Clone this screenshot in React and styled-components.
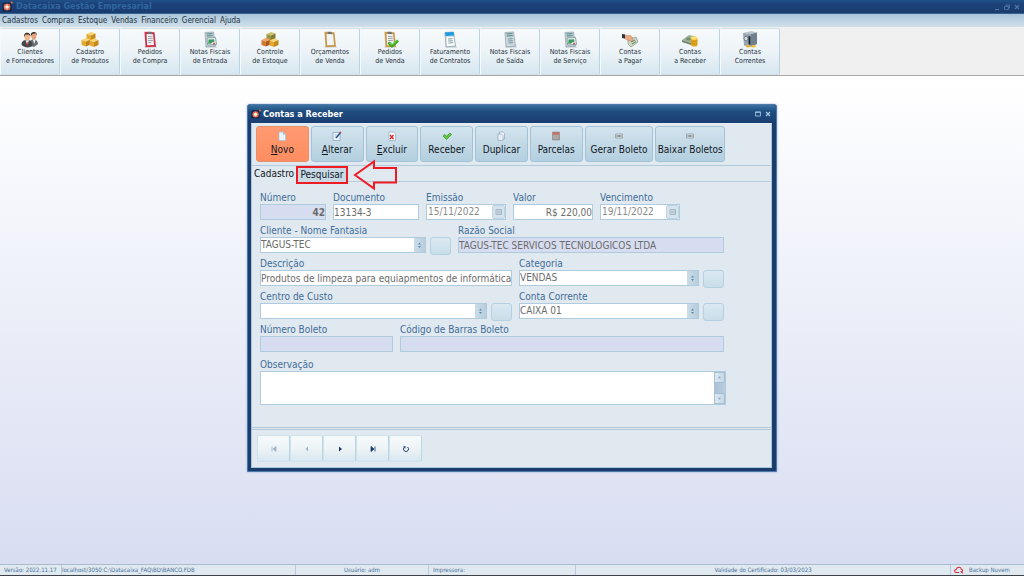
import styled, { createGlobalStyle, css } from "styled-components";

const GlobalStyle = createGlobalStyle`
  * {
    box-sizing: border-box;
  }

  body {
    margin: 0;
  }

  body,
  button,
  input,
  select,
  textarea {
    font-family: "DejaVu Sans Condensed", "DejaVu Sans", sans-serif;
  }

  button {
    padding: 0;
    cursor: pointer;
  }
`;

const Page = styled.div`
  min-height: 100vh;
  display: flex;
  flex-direction: column;
  background: linear-gradient(#ffffff 14%, #d7dcf1);
`;

const AppTitleBar = styled.header`
  height: 14px;
  padding: 0 4px 0 2px;

  display: flex;
  align-items: center;
  gap: 3px;

  background: linear-gradient(#20508a, #1b4278 30%, #1a3c70);
  border-bottom: 1px solid #34618f;
`;

const AppTitle = styled.h1`
  margin: 0;
  font-size: 8px;
  line-height: 12px;
  font-weight: bold;
  font-family: "DejaVu Sans", sans-serif;
  color: #30679f;
`;

const WindowControls = styled.div`
  margin-left: auto;
  display: flex;
  align-items: center;
  gap: 4px;
`;

const WindowButton = styled.button`
  width: 6px;
  height: 8px;
  display: flex;
  border: 0;
  background: none;
  color: ${({ $color }) => $color || "#4f78a6"};

  svg {
    width: 6px;
    height: 8px;
  }
`;

const MenuBar = styled.nav`
  height: 13px;
  padding: 0 2px;

  display: flex;
  align-items: center;
  gap: 4px;

  background: linear-gradient(#a9c5da, #d0e0ea);
`;

const MenuLink = styled.a`
  font-size: 8px;
  line-height: 12px;
  color: #24323f;
  text-decoration: none;
`;

const Toolbar = styled.div`
  height: 49px;
  padding-top: 1px;
  display: flex;
  background: #f0f0f0;
  border-bottom: 1px solid #a8a8a8;
`;

const ToolButton = styled.button`
  flex: 0 0 60px;
  padding-top: 2px;

  display: flex;
  flex-direction: column;
  align-items: center;

  border: 1px solid #cfe0ea;
  border-left-color: #f4fafd;
  border-right-color: #b9d3e2;
  border-radius: 2px;
  background: linear-gradient(#f7fafb, #eef4f8 45%, #d7e7f0);

  font-size: 7px;
  line-height: 9px;
  color: #26323c;
  white-space: pre-line;

  svg {
    width: 18px;
    height: 17px;
  }
`;

const Desktop = styled.main`
  flex: 1;
  padding: 28px 0;
`;

const Dialog = styled.section`
  width: 530px;
  max-width: 100%;
  margin: 0 auto;

  border: 1px solid #4d7aa8;
  border-radius: 3px 3px 0 0;
  background: #1a3d6d;
  box-shadow: 0 0 2px #8aa5cc;
`;

const DialogTitleBar = styled.header`
  height: 18px;
  padding: 0 5px 0 3px;

  display: flex;
  align-items: center;
  gap: 2px;

  border-radius: 3px 3px 0 0;
  background: linear-gradient(#3a72a0, #1f4d80 35%, #1a3d70);
`;

const DialogTitle = styled.h2`
  margin: 0;
  font-size: 9px;
  line-height: 12px;
  font-weight: bold;
  color: #ffffff;
`;

const DialogBody = styled.div`
  margin: 0 4px 3px 3px;
  border: 1px solid #a9c6da;
  border-top-color: #e6eef5;
  background: #e1e9f0;
`;

const Actions = styled.div`
  height: 42px;
  padding: 2px 46px 3px 4px;

  display: grid;
  grid-template-columns: repeat(6, 53fr) 69fr 70fr;
  gap: 2px;

  border-bottom: 1px solid #b4cadb;
`;

const ActionButton = styled.button`
  min-width: 0;
  padding-top: 2px;

  display: flex;
  flex-direction: column;
  align-items: center;
  gap: 2px;

  border: 1px solid ${({ $active }) => ($active ? "#e8906a" : "#a2c2d7")};
  border-radius: 3px;
  background: ${({ $active }) =>
    $active
      ? "linear-gradient(#ff9a72, #ff8d60)"
      : "linear-gradient(#d3e4ee, #c3d9e6 50%, #b3cfe0)"};

  font-size: 10px;
  line-height: 14px;
  color: #10181f;
  white-space: nowrap;

  svg {
    width: 10px;
    height: 10px;
    margin-top: 2px;
  }
`;

const Tabs = styled.div`
  position: relative;
  height: 16px;
  display: flex;
  align-items: flex-start;
  border-bottom: 1px solid #b9cedd;
`;

const Tab = styled.button`
  flex: none;
  border: 0;
  font-size: 10px;
  color: #10181f;

  ${({ $active }) =>
    $active
      ? css`
          width: 44px;
          height: 16px;
          line-height: 16px;
          background: #e1e9f0;
        `
      : css`
          width: 52px;
          height: 18px;
          line-height: 14px;
          border: 2px solid #ed1c24;
          background: #c9dae6;
        `}
`;

const Pointer = styled.svg`
  position: absolute;
  left: 101px;
  top: -7px;
  width: 44px;
  height: 32px;
`;

const Form = styled.form`
  padding: 10px 47px 22px 8px;
  display: flex;
  flex-direction: column;
  gap: 5px;
`;

const Row = styled.div`
  display: grid;
  grid-template-columns: ${({ $columns }) => $columns};
  align-items: end;
  gap: 7px;
`;

const Field = styled.div`
  min-width: 0;
  display: flex;
  flex-direction: column;
`;

const NoteField = styled(Field)`
  margin: 2px -2px 0 0;
`;

const Label = styled.label`
  font-size: 10px;
  line-height: 12px;
  color: #3f6c98;
  white-space: nowrap;
`;

const fieldBox = css`
  min-width: 0;
  width: 100%;
  height: 16px;
  padding: 0;

  border: 1px solid #b0cbde;
  border-radius: 0;
  outline: 0;
  background: ${({ readOnly }) => (readOnly ? "#d7ddf0" : "#ffffff")};

  font-size: 10px;
  line-height: 14px;
  color: #6b6b6b;
`;

const Input = styled.input`
  ${fieldBox}
  text-align: ${({ $align }) => $align || "left"};
  font-weight: ${({ $bold }) => ($bold ? "bold" : "normal")};
`;

const Combo = styled.div`
  display: flex;
  gap: 4px;
`;

const SelectWrap = styled.div`
  position: relative;
  flex: 1;
  min-width: 0;
`;

const Select = styled.select`
  ${fieldBox}
  display: block;
  appearance: none;
`;

const Spinner = styled.span`
  position: absolute;
  top: 1px;
  right: 1px;
  width: 11px;
  height: 14px;

  display: flex;
  background: linear-gradient(90deg, #cbdce8, #b7cedd);
  pointer-events: none;
`;

const LookupButton = styled.button`
  flex: 0 0 21px;
  height: 18px;
  margin-bottom: -2px;
  border: 1px solid #b5d0e0;
  border-radius: 3px;
  background: linear-gradient(#dae9f2, #c9dee9);
`;

const DateBox = styled.div`
  display: flex;
  border: 1px solid #b0cbde;
  background: #ffffff;

  input {
    height: 14px;
    padding: 0 1px;
    border: 0;
    color: #8b8b8b;
  }
`;

const DateButton = styled.button`
  flex: 0 0 13px;
  display: flex;
  border: 1px solid #bdd4e2;
  border-radius: 2px;
  background: #d5e3ec;
`;

const NoteBox = styled.div`
  height: 34px;
  display: flex;
  border: 1px solid #b0cbde;
  background: #ffffff;
`;

const Note = styled.textarea`
  flex: 1;
  padding: 1px;
  border: 0;
  outline: 0;
  resize: none;
  font-size: 10px;
  color: #6b6b6b;
`;

const ScrollTrack = styled.div`
  width: 11px;
  display: flex;
  flex-direction: column;
  justify-content: space-between;
  background: linear-gradient(90deg, #a9bfd3, #b8cfe0);
`;

const ScrollButton = styled.button`
  height: 11px;
  display: flex;
  border: 1px solid #a3c2d6;
  border-radius: 1px;
  background: linear-gradient(90deg, #dce8f0, #c7d9e6);
`;

const Navigator = styled.footer`
  height: 40px;
  padding: 5px;
  display: flex;
  border-top: 3px double #b0c7d8;
`;

const NavButton = styled.button`
  flex: 0 0 33px;
  height: 27px;

  display: flex;
  align-items: center;
  justify-content: center;

  border: 1px solid #cfe2ec;
  border-right-color: #b9d6e5;
  border-radius: 2px;
  background: linear-gradient(#f7fafb, #edf3f6 50%, #d8e8f0);
  color: #183a6c;

  &:disabled {
    color: #9fb4c8;
  }

  svg {
    width: 8px;
    height: 8px;
  }
`;

const StatusBar = styled.footer`
  height: 12px;
  display: grid;
  grid-template-columns: 62fr 234fr 133fr 147fr 375fr 73fr;
  border-top: 1px solid #a5bcd3;
  border-bottom: 1px solid #3c4248;
  background: #e1e9f0;
`;

const StatusCell = styled.div`
  padding: 0 0 0 ${({ $inset }) => $inset || 0}px;

  display: flex;
  align-items: center;
  justify-content: ${({ $center }) => ($center ? "center" : "flex-start")};
  gap: 5px;

  border-right: 1px solid #b9cbdc;
  font-size: 6px;
  line-height: 10px;
  color: #47719a;
  white-space: nowrap;

  &:last-child {
    border-right: 0;
  }

  svg {
    width: 10px;
    height: 8px;
  }
`;

const Logo = ({ size }) => (
  <svg width={size} height={size} viewBox="0 0 12 12">
    <rect x="0.5" y="1.5" width="10" height="10" rx="1.5" fill="#14264a" />
    <rect x="2" y="3" width="7" height="7" rx="2" fill="#e0694a" />
    <circle cx="5.5" cy="6.5" r="2" fill="#fff1e4" />
    <path d="M5.500 3v1.500M5.500 8.500V10M2 6.500h1.500M7.500 6.500H9" stroke="#ffc4a3" strokeWidth="0.7" />
    <circle cx="10.700" cy="1.700" r="1.200" fill="#f0703c" />
  </svg>
);

const PeopleIcon = () => (
  <svg viewBox="0 0 18 17">
    <path d="M8 14c0-4 2-5.500 4.500-5.500S17 10 17 13l-4 3z" fill="#6b6f74" />
    <path d="M12 9l1.200 4 1.300-4z" fill="#eceff1" />
    <ellipse cx="12.800" cy="5" rx="2.600" ry="3.400" fill="#e3a47c" />
    <path d="M9.800 5C9 0 16.500-.5 15.900 4.500l-1.200-2.200-3 .4z" fill="#2e2521" />
    <path d="M.5 14c0-3.800 2-5 5.500-5s5.500 1.500 5.500 6c-3 2-8 2-11-1z" fill="#44484d" />
    <path d="M4.500 9.200L6.300 14 8 9.200z" fill="#f4f4f4" />
    <path d="M6 10l-.4 4 .9 1 .8-1z" fill="#c23b32" />
    <ellipse cx="6.300" cy="6" rx="2.800" ry="3.600" fill="#efb68d" />
    <path d="M3.200 6C2 .5 10 .2 9.300 5.500L8 3.400l-3.500.2z" fill="#33271f" />
  </svg>
);

const Cube = ({ x, y, top, left, right }) => (
  <g transform={`translate(${x} ${y})`}>
    <path d="M0 2l4.500-2L9 1.500 4.500 3.500z" fill={top} />
    <path d="M0 2l4.500 1.500v5L0 7z" fill={left} />
    <path d="M4.500 3.500L9 1.500v5l-4.500 2z" fill={right} />
  </g>
);

const BoxesIcon = ({ mixed }) => (
  <svg viewBox="0 0 18 17">
    <Cube
      x={5.5}
      y={1}
      top={mixed ? "#c9c26a" : "#f8d673"}
      left={mixed ? "#9c9740" : "#e2aa33"}
      right={mixed ? "#827c30" : "#c58a1c"}
    />
    <Cube
      x={0.5}
      y={7}
      top={mixed ? "#f0a566" : "#f8d673"}
      left={mixed ? "#d27a34" : "#e2aa33"}
      right={mixed ? "#b0571c" : "#c08318"}
    />
    <Cube x={8.500} y={7.500} top="#f8d673" left="#e2aa33" right="#c58a1c" />
  </svg>
);

const ClipboardIcon = ({ frame, check, blank }) => (
  <svg viewBox="0 0 18 17">
    <path d="M3 15.500l12-.5 1 1.500H4z" fill="#c9d0d5" />
    <path d="M3.500.8l10 .4 1.500 14.500-10.500.5z" fill={frame} />
    <path d="M5.500 3l6.500.2L13 14l-6.800.3z" fill="#f1f4f7" />
    <path d="M6.500.8h4l.5 2.200H7z" fill="#6f7377" />
    {!blank && (
      <path
        d="M7 5.500l4.500.2M7 7.500l4.700.2M7.200 9.500l4.700.1M7.300 11.500l3 .1"
        stroke="#888f96"
        strokeWidth="0.8"
      />
    )}
    {check && (
      <>
        <path d="M7.500 11.500l3.500 3.500 6-5.500" fill="none" stroke="#35a81b" strokeWidth="2.800" />
        <path d="M8 11.500l3 2.600 5.300-4.800" fill="none" stroke="#7be04d" strokeWidth="0.9" />
      </>
    )}
  </svg>
);

const InvoiceIcon = ({ variant }) => (
  <svg viewBox="0 0 18 17">
    <path d="M4 15.500l11-.5 1 1.500H5z" fill="#bcc8cf" />
    <path d="M4 1.500L12.500 1l2 14L5 16z" fill="#cbd9df" stroke="#8c9da6" strokeWidth="0.7" />
    {variant === "contract" ? (
      <>
        <path d="M5.500 6l7-.3 1.200 8.800-7.700.7z" fill="#fafcfd" />
        <path d="M4 1.500L12.500 1l.6 3.500-8.600.5z" fill="#1b9be4" />
      </>
    ) : (
      <path d="M5.500 3l6-.4M5.700 5l6.100-.3" stroke="#467f7b" strokeWidth="1" />
    )}
    <path d="M7 8l4.500-.3M7.200 10l4.600-.3M7.500 12l4.700-.4" stroke="#718d96" strokeWidth="0.9" />
    {variant === "chart" && (
      <>
        <path d="M6 7l8.500-.5 1 7-9 .5z" fill="#eef4f4" stroke="#687f86" strokeWidth="0.7" />
        <path d="M7.200 12.800l.3-4.300 5.500-.3.6 2.300-2.600 1-1 1.300z" fill="#3f9a63" />
        <path d="M12 12.500h2" stroke="#d54b46" strokeWidth="1.400" />
      </>
    )}
  </svg>
);

const PayIcon = () => (
  <svg viewBox="0 0 18 17">
    <path d="M7 9l8-3 2 5-7 5-3-3z" fill="#ccd6c3" stroke="#899880" strokeWidth="0.7" />
    <path d="M10 11l4-2M11 13l4-2.500" stroke="#688063" />
    <path d="M3 4l7 .8 2 2.200-1 .5 1 2-2 .5-4-1-3-2z" fill="#e9ab85" stroke="#b77554" strokeWidth="0.4" />
    <path d="M1 3l3 .5v4L1 7z" fill="#2f3338" />
  </svg>
);

const ReceiveIcon = () => (
  <svg viewBox="0 0 18 17">
    <path d="M1 9l7-5 7 1.500L10 12z" fill="#9fb09a" />
    <path d="M1 9v2l9 3v-2z" fill="#6f836d" />
    <ellipse cx="7.500" cy="8" rx="2.500" ry="1.500" fill="#76906e" />
    <path d="M10 7v7c0 2 6.500 2 6.500 0V7z" fill="#e4a91b" />
    <ellipse cx="13.200" cy="7" rx="3.300" ry="1.800" fill="#ffe06a" />
    <path
      d="M10 9.500c1 1.500 5 1.500 6.500 0M10 12c1 1.500 5 1.500 6.500 0"
      fill="none"
      stroke="#b67c10"
      strokeWidth="0.6"
    />
  </svg>
);

const SafeIcon = () => (
  <svg viewBox="0 0 18 17">
    <path d="M2 2l8-2 6 1.500-6 1.500z" fill="#bac6ce" />
    <path d="M2 2l8 1v13l-7-1.500z" fill="#96a5b0" />
    <path d="M10 3l6-1.500V13l-6 3z" fill="#6f818e" />
    <path d="M7.500 5l2 .4V14l-2-1z" fill="#1d2a34" />
    <circle cx="5" cy="7.500" r="2" fill="#dde5ea" stroke="#465660" strokeWidth="0.6" />
    <ellipse cx="7" cy="15.300" rx="2.200" ry="1.300" fill="#e8b32a" />
    <ellipse cx="12.500" cy="15.300" rx="2.400" ry="1.300" fill="#f0c038" />
  </svg>
);

const PageIcon = () => (
  <svg viewBox="0 0 10 10">
    <path d="M2 1h4l2.500 2.500V9.500H2z" fill="#eaf4fd" stroke="#9cc0e0" strokeWidth="0.6" />
    <path d="M6 1v2.500h2.500z" fill="#8bb9df" />
  </svg>
);

const EditIcon = () => (
  <svg viewBox="0 0 10 10">
    <path d="M1 1.500h7V9.500H1z" fill="#f3f7fc" stroke="#7d9cc2" strokeWidth="0.7" />
    <path d="M2.500 4h3M2.500 6h2" stroke="#8ea9c7" strokeWidth="0.7" />
    <path d="M4 7l4.500-5.500" stroke="#34558f" strokeWidth="1.600" />
    <path d="M8 2l1-1.200" stroke="#d9534b" strokeWidth="1.600" />
  </svg>
);

const DeleteIcon = () => (
  <svg viewBox="0 0 10 10">
    <path d="M2 1h5l1.500 1.500V9.500H2z" fill="#f4f7fb" stroke="#98a9ba" strokeWidth="0.7" />
    <path d="M3 4l3.500 4M6.500 4L3 8" stroke="#d8262a" strokeWidth="1.300" />
  </svg>
);

const CheckIcon = () => (
  <svg viewBox="0 0 10 10">
    <path
      d="M1 5l2-1.500 1.500 1.700L8 2l1.500 1.500L4.500 8.500z"
      fill="#5cc93c"
      stroke="#26851b"
      strokeWidth="0.6"
    />
  </svg>
);

const CopyIcon = () => (
  <svg viewBox="0 0 10 10">
    <path d="M3.500 1h3.500l1.500 1.500V8h-5z" fill="#f3f7fa" stroke="#839cb0" strokeWidth="0.6" />
    <path d="M2 3h3.500L7 4.500v5H2z" fill="#e7eff5" stroke="#839cb0" strokeWidth="0.6" />
  </svg>
);

const CalendarIcon = () => (
  <svg viewBox="0 0 10 10">
    <path d="M1.500 1h7v8h-7z" fill="#a39d9b" stroke="#7d7775" strokeWidth="0.5" />
    <path d="M2 1.500h6v2H2z" fill="#d0685c" />
    <path d="M2.500 5h5M2.500 7h5" stroke="#cdc7c4" strokeWidth="0.8" strokeDasharray="1 .6" />
  </svg>
);

const BarcodeIcon = () => (
  <svg viewBox="0 0 10 10">
    <path d="M1.500 3h7v4h-7z" fill="#dfe3e6" stroke="#8b949b" strokeWidth="0.7" />
    <path d="M3 4v2M4.300 4v2M5.600 4v2M7 4v2" stroke="#6d757b" strokeWidth="0.8" />
  </svg>
);

const DayIcon = () => (
  <svg width="11" height="12" viewBox="0 0 11 12">
    <path d="M3 3.500h5.500v5H3z" fill="none" stroke="#9aabb9" strokeWidth="0.8" />
    <path d="M4 5.200h4M4 6.800h4" stroke="#9aabb9" strokeWidth="0.7" />
  </svg>
);

const SpinIcon = () => (
  <svg width="11" height="14" viewBox="0 0 11 14">
    <path d="M5.500 4.500l1.500 2H4zM5.500 10L7 8H4z" fill="#5f8bb0" />
  </svg>
);

const ArrowIcon = ({ down }) => (
  <svg width="9" height="9" viewBox="0 0 9 9">
    <path d={down ? "M3 3.800h3L4.500 5.800z" : "M3 5.200h3L4.500 3.200z"} fill="#8ca5b9" />
  </svg>
);

const CloseIcon = () => (
  <svg viewBox="0 0 6 8">
    <path d="M1 2l4 4M5 2L1 6" stroke="currentColor" strokeWidth="1.200" />
  </svg>
);

const MaxIcon = () => (
  <svg viewBox="0 0 6 8">
    <path d="M.5 2h5v4h-5z" fill="none" stroke="currentColor" strokeWidth="0.8" />
    <path d="M.5 2.200h5" stroke="currentColor" />
  </svg>
);

const RestoreIcon = () => (
  <svg viewBox="0 0 6 8">
    <path
      d="M2 3.500V2h3.500v3H4.500M.5 3.500h4v3h-4z"
      fill="none"
      stroke="currentColor"
      strokeWidth="0.8"
    />
  </svg>
);

const MinIcon = () => (
  <svg viewBox="0 0 6 8">
    <path d="M1 6.500h4" stroke="currentColor" />
  </svg>
);

const FirstIcon = () => (
  <svg viewBox="0 0 8 8">
    <path d="M2 1.500v5M6 1.500v5L3 4z" fill="currentColor" stroke="currentColor" strokeWidth="0.8" />
  </svg>
);

const PrevIcon = () => (
  <svg viewBox="0 0 8 8">
    <path d="M5 1.500v5L2.500 4z" fill="currentColor" />
  </svg>
);

const NextIcon = () => (
  <svg viewBox="0 0 8 8">
    <path d="M3 1.500v5L6 4z" fill="currentColor" />
  </svg>
);

const LastIcon = () => (
  <svg viewBox="0 0 8 8">
    <path d="M6 1.500v5M2 1.500v5L5 4z" fill="currentColor" stroke="currentColor" strokeWidth="0.8" />
  </svg>
);

const RefreshIcon = () => (
  <svg viewBox="0 0 8 8">
    <path d="M5.500 2a2.500 2.500 0 1 1-3.300.3" fill="none" stroke="currentColor" />
    <path d="M1 1.200h2.500v2.500z" fill="currentColor" />
  </svg>
);

const CloudIcon = () => (
  <svg viewBox="0 0 10 8">
    <path
      d="M5 6.500H2.300A1.600 1.600 0 0 1 2.300 3.300 2.600 2.600 0 0 1 7.300 3a1.700 1.700 0 0 1 1.300 2"
      fill="none"
      stroke="#d8262e"
      strokeWidth="1.100"
    />
    <path d="M6 5.200h2.800V8z" fill="#d8262e" />
  </svg>
);

const menus = ["Cadastros", "Compras", "Estoque", "Vendas", "Financeiro", "Gerencial", "Ajuda"];

const tools = [
  { label: "Clientes\ne Fornecedores", icon: <PeopleIcon /> },
  { label: "Cadastro\nde Produtos", icon: <BoxesIcon /> },
  { label: "Pedidos\nde Compra", icon: <ClipboardIcon frame="#cf3348" /> },
  { label: "Notas Fiscais\nde Entrada", icon: <InvoiceIcon variant="chart" /> },
  { label: "Controle\nde Estoque", icon: <BoxesIcon mixed /> },
  { label: "Orçamentos\nde Venda", icon: <ClipboardIcon frame="#c99a4d" blank /> },
  { label: "Pedidos\nde Venda", icon: <ClipboardIcon frame="#c99a4d" check /> },
  { label: "Faturamento\nde Contratos", icon: <InvoiceIcon variant="contract" /> },
  { label: "Notas Fiscais\nde Saída", icon: <InvoiceIcon /> },
  { label: "Notas Fiscais\nde Serviço", icon: <InvoiceIcon variant="chart" /> },
  { label: "Contas\na Pagar", icon: <PayIcon /> },
  { label: "Contas\na Receber", icon: <ReceiveIcon /> },
  { label: "Contas\nCorrentes", icon: <SafeIcon /> },
];

const actions = [
  { label: "Novo", icon: <PageIcon />, hotkey: true, active: true },
  { label: "Alterar", icon: <EditIcon />, hotkey: true },
  { label: "Excluir", icon: <DeleteIcon />, hotkey: true },
  { label: "Receber", icon: <CheckIcon /> },
  { label: "Duplicar", icon: <CopyIcon /> },
  { label: "Parcelas", icon: <CalendarIcon /> },
  { label: "Gerar Boleto", icon: <BarcodeIcon /> },
  { label: "Baixar Boletos", icon: <BarcodeIcon /> },
];

const TextField = ({ id, label, value, ...rest }) => (
  <Field>
    <Label htmlFor={id}>{label}</Label>
    <Input id={id} defaultValue={value} {...rest} />
  </Field>
);

const DateField = ({ id, label, value }) => (
  <Field>
    <Label htmlFor={id}>{label}</Label>
    <DateBox>
      <Input id={id} defaultValue={value} />
      <DateButton type="button" aria-label={`Calendário ${label}`}>
        <DayIcon />
      </DateButton>
    </DateBox>
  </Field>
);

const SelectField = ({ id, label, value }) => (
  <Field>
    <Label htmlFor={id}>{label}</Label>
    <Combo>
      <SelectWrap>
        <Select id={id}>
          <option>{value}</option>
        </Select>
        <Spinner>
          <SpinIcon />
        </Spinner>
      </SelectWrap>
      <LookupButton type="button" aria-label={`Localizar ${label}`} />
    </Combo>
  </Field>
);

const App = () => (
  <>
    <GlobalStyle />
    <Page>
      <AppTitleBar>
        <Logo size={11} />
        <AppTitle>Datacaixa Gestão Empresarial</AppTitle>
        <WindowControls>
          <WindowButton aria-label="Minimizar"><MinIcon /></WindowButton>
          <WindowButton aria-label="Restaurar"><RestoreIcon /></WindowButton>
          <WindowButton aria-label="Fechar"><CloseIcon /></WindowButton>
        </WindowControls>
      </AppTitleBar>

      <MenuBar>
        {menus.map((menu) => (
          <MenuLink key={menu} href="#">{menu}</MenuLink>
        ))}
      </MenuBar>

      <Toolbar>
        {tools.map(({ label, icon }) => (
          <ToolButton key={label}>
            {icon}
            <span>{label}</span>
          </ToolButton>
        ))}
      </Toolbar>

      <Desktop>
        <Dialog>
          <DialogTitleBar>
            <Logo size={10} />
            <DialogTitle>Contas a Receber</DialogTitle>
            <WindowControls>
              <WindowButton $color="#a9cbe6" aria-label="Maximizar"><MaxIcon /></WindowButton>
              <WindowButton $color="#a9cbe6" aria-label="Fechar janela"><CloseIcon /></WindowButton>
            </WindowControls>
          </DialogTitleBar>

          <DialogBody>
            <Actions>
              {actions.map(({ label, icon, hotkey, active }) => (
                <ActionButton key={label} $active={active}>
                  {icon}
                  <span>
                    {hotkey ? <u>{label[0]}</u> : label[0]}
                    {label.slice(1)}
                  </span>
                </ActionButton>
              ))}
            </Actions>

            <Tabs role="tablist">
              <Tab role="tab" aria-selected="true" $active>Cadastro</Tab>
              <Tab role="tab" aria-selected="false">Pesquisar</Tab>
              <Pointer viewBox="0 0 44 32">
                <path
                  d="M2 16L21 2.500V9H43V23.500H21V29.500z"
                  fill="none"
                  stroke="#ed1c24"
                  strokeWidth="2"
                />
              </Pointer>
            </Tabs>

            <Form>
              <Row $columns="66fr 86fr 80fr 80fr 80fr 37fr">
                <TextField id="numero" label="Número" value="42" readOnly $align="right" $bold />
                <TextField id="documento" label="Documento" value="13134-3" />
                <DateField id="emissao" label="Emissão" value="15/11/2022" />
                <TextField id="valor" label="Valor" value="R$ 220,00" $align="right" />
                <DateField id="vencimento" label="Vencimento" value="19/11/2022" />
              </Row>
              <Row $columns="191fr 266fr">
                <SelectField id="cliente" label="Cliente - Nome Fantasia" value="TAGUS-TEC" />
                <TextField
                  id="razao"
                  label="Razão Social"
                  value="TAGUS-TEC SERVICOS TECNOLOGICOS LTDA"
                  readOnly
                />
              </Row>
              <Row $columns="252fr 205fr">
                <TextField
                  id="descricao"
                  label="Descrição"
                  value="Produtos de limpeza para equiapmentos de informática"
                />
                <SelectField id="categoria" label="Categoria" value="VENDAS" />
              </Row>
              <Row $columns="252fr 205fr">
                <SelectField id="centro" label="Centro de Custo" value="" />
                <SelectField id="conta" label="Conta Corrente" value="CAIXA 01" />
              </Row>
              <Row $columns="133fr 324fr">
                <TextField id="boleto" label="Número Boleto" value="" readOnly />
                <TextField id="barras" label="Código de Barras Boleto" value="" readOnly />
              </Row>
              <NoteField>
                <Label htmlFor="observacao">Observação</Label>
                <NoteBox>
                  <Note id="observacao" />
                  <ScrollTrack>
                    <ScrollButton type="button" aria-label="Rolar para cima"><ArrowIcon /></ScrollButton>
                    <ScrollButton type="button" aria-label="Rolar para baixo"><ArrowIcon down /></ScrollButton>
                  </ScrollTrack>
                </NoteBox>
              </NoteField>
            </Form>

            <Navigator>
              <NavButton disabled aria-label="Primeiro"><FirstIcon /></NavButton>
              <NavButton disabled aria-label="Anterior"><PrevIcon /></NavButton>
              <NavButton aria-label="Próximo"><NextIcon /></NavButton>
              <NavButton aria-label="Último"><LastIcon /></NavButton>
              <NavButton aria-label="Atualizar"><RefreshIcon /></NavButton>
            </Navigator>
          </DialogBody>
        </Dialog>
      </Desktop>

      <StatusBar>
        <StatusCell $inset={4}>Versão: 2022.11.17</StatusCell>
        <StatusCell>localhost/3050:C:\Datacaixa_FAQ\BD\BANCO.FDB</StatusCell>
        <StatusCell $center>Usuário: adm</StatusCell>
        <StatusCell $inset={4}>Impressora:</StatusCell>
        <StatusCell $center>Validade do Certificado: 03/03/2023</StatusCell>
        <StatusCell $inset={3}>
          <CloudIcon />
          Backup Nuvem
        </StatusCell>
      </StatusBar>
    </Page>
  </>
);

export default App;
